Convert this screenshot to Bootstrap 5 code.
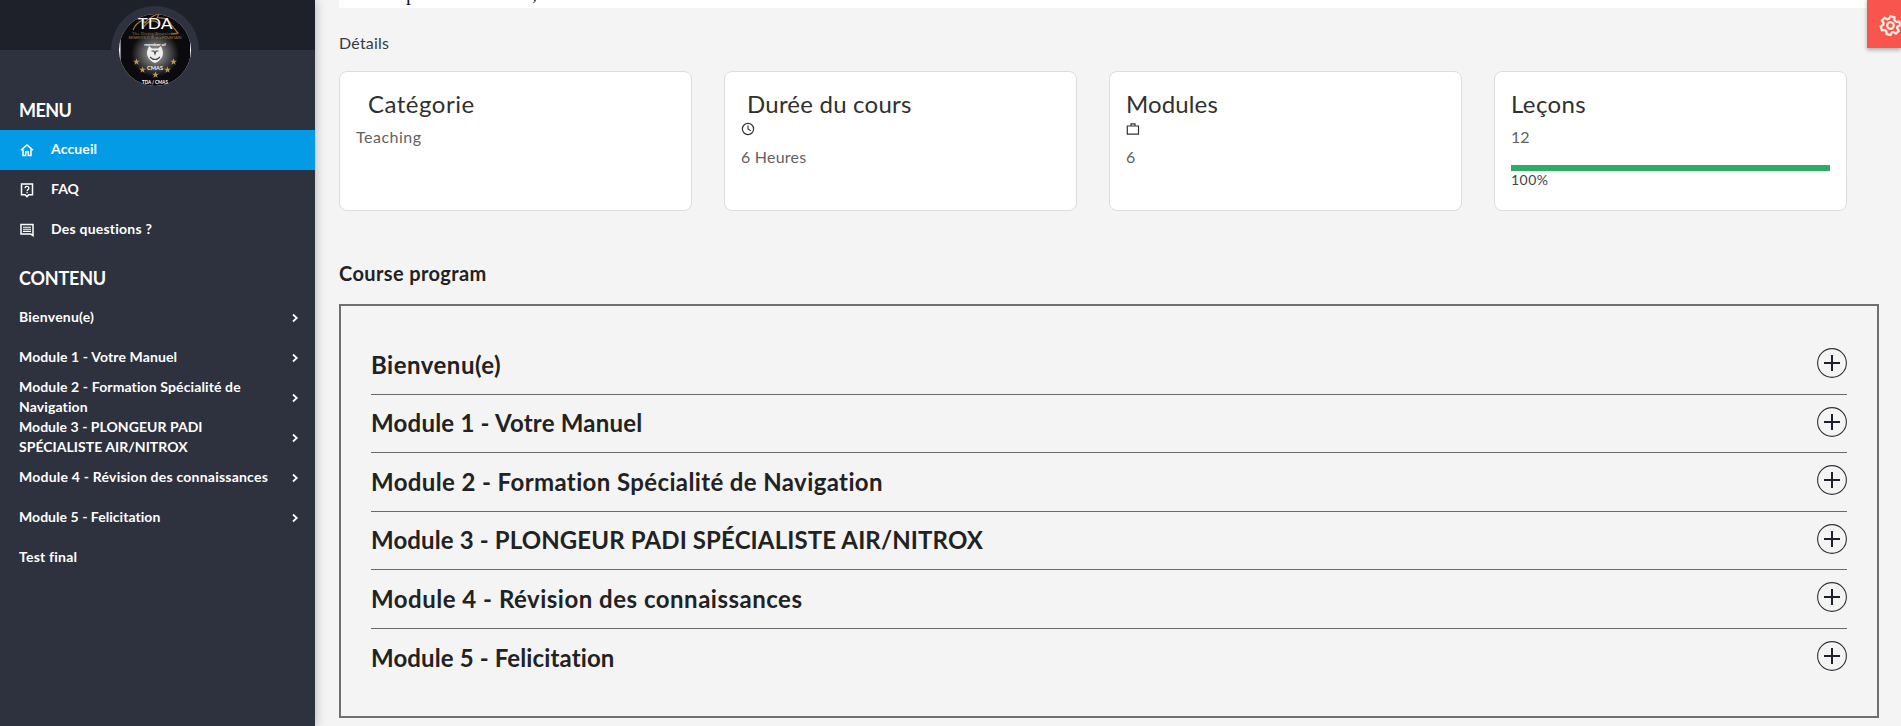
<!DOCTYPE html>
<html lang="fr">
<head>
<meta charset="utf-8">
<meta name="viewport" content="width=device-width, initial-scale=1">
<title>TDA / CMAS</title>
<link href="https://cdn.jsdelivr.net/npm/bootstrap@5.3.0/dist/css/bootstrap.min.css" rel="stylesheet">
<style>
body{font-family:Lato,"Open Sans",sans-serif;background:#f4f4f4;color:#222;font-size:16px;height:726px;overflow:hidden}
.side{width:315px;height:726px;background:#2e313e;color:#fff;box-shadow:0 0 10px rgba(40,40,60,.35);z-index:2}
.side-top{height:90px;background:linear-gradient(#1e212a 50px,#2e313e 50px)}
.logo-ring{width:88px;height:88px;margin:6px 0 0 -6px;border-radius:50%;background:#2e313e;display:block}
.side-title{font-size:18px;font-weight:700;line-height:40px;padding-left:19px}
.side-link{height:40px;font-size:14px;font-weight:700;line-height:20px;padding:0 16px 0 19px;color:#fff;text-decoration:none}
.side-link.on{background:#039be5}
.side-link span{margin-top:-2px}
.side-link .lead-ic{width:16px;height:16px;margin-right:16px}
.main-col{padding:0 22px 0 24px}
.intro{height:8px;background:#fff;overflow:hidden;font:20px/20px "Liberation Serif",serif;color:#111}
.intro p{margin-top:-17px;padding-left:67px}
.intro span{margin-right:116px}
.sect-label{padding-top:23px;color:#3a3a3a}
.tiles{gap:32px;padding-right:32px}
.tile{height:140px;border:1px solid #ddd;border-radius:8px;padding:14px 16px 16px;flex:1 1 0}
.tile h2{font-size:24px;font-weight:400;line-height:36px;margin:0 0 2px;color:#303030}
.tile p{font-size:16px;line-height:24px;margin:0;padding-top:1px;color:#626262}
.tile svg{width:14px;height:14px;display:block;margin-top:-2px}
.tile svg + p{padding-top:9px}
.dur{padding-left:6px}
.bar{height:6px;background:#2eab66;border-radius:0}
.tile .bar-wrap{margin-top:16px}
.bar-note{font-size:14px;line-height:18px;color:#444}
.prog-title{font-size:20px;font-weight:700;line-height:24px;padding:50px 0 19px}
.prog-box{height:414px;border:2px solid #6f6f6f;padding:30px}
.prog-row{height:58.5px;border-bottom:1px solid #6a6a6a;font-size:24px;font-weight:700}
.prog-row:last-child{border-bottom:0}
.prog-row svg{width:30px;height:30px;margin-top:-3px}
.t-2{letter-spacing:-.2px}.t0{letter-spacing:.04px}.t1{letter-spacing:.12px}.t2{letter-spacing:.22px}.t3{letter-spacing:.38px}.t4{letter-spacing:.5px}
.menu-h{letter-spacing:-.6px}
.gear{right:0;top:-2px;width:34px;height:50px;background:#f8554e;box-shadow:0 2px 4px rgba(0,0,0,.3);z-index:3;overflow:hidden}
</style>
</head>
<body class="d-flex">
<svg class="d-none">
  <symbol id="chev" viewBox="0 0 8 10"><path d="M2 1.5 5.8 5 2 8.5" fill="none" stroke="#fff" stroke-width="1.7"/></symbol>
  <symbol id="plus" viewBox="0 0 30 30"><circle cx="15" cy="15" r="14.4" fill="none" stroke="#333" stroke-width="1.1"/><path d="M7 15h16M15 7v16" stroke="#1d1f2c" stroke-width="2"/></symbol>
  <symbol id="star" viewBox="0 0 10 10"><path d="M5 .3 6.2 3.8H9.8L6.9 6 8 9.6 5 7.4 2 9.6 3.1 6 .2 3.8H3.8z" fill="#b99a4c"/></symbol>
</svg>

<nav class="side flex-shrink-0 position-relative">
  <div class="side-top d-flex justify-content-center">
    <svg class="logo-ring" viewBox="0 0 88 88">
      <defs>
        <radialGradient id="glow"><stop offset="0" stop-color="#aaa"/><stop offset=".45" stop-color="#666"/><stop offset="1" stop-color="#0b0a0e"/></radialGradient>
        <clipPath id="disc"><circle cx="44" cy="44" r="36"/></clipPath>
      </defs>
      <g clip-path="url(#disc)" font-family="Lato, sans-serif" text-anchor="middle">
        <rect width="88" height="88" fill="#fff"/><rect x="9.5" width="69.5" height="88" fill="#0b0a0e"/>
        <ellipse cx="44" cy="48" rx="24" ry="23" fill="url(#glow)"/>
        <path d="M22 24c2-5 5-8 10-10l2 3c5-6 9-8 14-9l-2 4c8-1 13 3 15 8l6 7-7 1M32 22c6-9 12-9 17-3" fill="none" stroke="#9b7b3e" stroke-width="1.2"/>
        <text x="44" y="22.5" font-size="15" fill="#fff" textLength="35" lengthAdjust="spacingAndGlyphs">TDA</text>
        <text x="44" y="28.5" font-size="4.2" fill="#8b6b3a" textLength="46">The Diving Association</text>
        <text x="44" y="33" font-size="3.8" fill="#a08048" textLength="53" lengthAdjust="spacingAndGlyphs">BENEFITS IT IF at a FOUNTAIN</text>
        <text x="44" y="39.5" font-size="4.5" font-weight="700" fill="#fff">member of</text>
        <path d="M38 40l3 2.5h6l3-2.5c.5 2 3 5 1.500 10-1 3-4.500 6-7.500 7-3-1-6.500-4-7.500-7-1.500-5 1-8 1.500-10z" fill="#eee"/>
        <path d="M40.500 45h2.500l1 3 1-3h2.500M39 51q5 5 10 0" fill="none" stroke="#444" stroke-width="1.1"/>
        <text x="44" y="63.500" font-size="5.600" font-weight="700" fill="#f4f4f4">CMAS</text>
        <use href="#star" x="22" y="52" width="7" height="7"/><use href="#star" x="28" y="60" width="7" height="7"/><use href="#star" x="41" y="65" width="7" height="7"/><use href="#star" x="53" y="60" width="7" height="7"/><use href="#star" x="59" y="52" width="7" height="7"/>
        <text x="44" y="78" font-size="4.600" font-weight="700" fill="#fff" textLength="26">TDA / CMAS</text>
      </g>
    </svg>
  </div>
  <div class="side-title menu-h">MENU</div>
  <a href="#" class="side-link on d-flex align-items-center"><svg class="lead-ic" viewBox="0 0 16 16"><path d="M2 8.3 8 3l6 5.3M4 7.500v6h2.700V9.700h2.600v3.800H12v-6" fill="none" stroke="#fff" stroke-width="1.500"/></svg><span class="t1">Accueil</span></a>
  <a href="#" class="side-link d-flex align-items-center"><svg class="lead-ic" viewBox="0 0 16 16"><path d="M2.500 2h11v10.800h-3.700L8 14.600l-1.800-1.800H2.500z" fill="none" stroke="#fff" stroke-width="1.500"/><path d="M6.100 6.200c0-2.400 3.800-2.400 3.800 0 0 1.300-1.800 1.300-1.800 3M8.100 10v1.300" fill="none" stroke="#fff" stroke-width="1.300"/></svg><span class="t0">FAQ</span></a>
  <a href="#" class="side-link d-flex align-items-center"><svg class="lead-ic" viewBox="0 0 16 16"><path d="M2 2.500h12v11L11.700 12H2z" fill="none" stroke="#fff" stroke-width="1.500"/><path d="M4 5.200h8M4 7.300h8M4 9.400h8" stroke="#fff" stroke-width="1.100"/></svg><span class="t2">Des questions ?</span></a>
  <div class="side-title t-2 pt-2">CONTENU</div>
  <a href="#" class="side-link d-flex align-items-center justify-content-between"><span class="t2">Bienvenu(e)</span><svg width="8" height="10"><use href="#chev"/></svg></a>
  <a href="#" class="side-link d-flex align-items-center justify-content-between"><span class="t1">Module 1 - Votre Manuel</span><svg width="8" height="10"><use href="#chev"/></svg></a>
  <a href="#" class="side-link d-flex align-items-center justify-content-between"><span class="t1">Module 2 - Formation Spécialité de<br>Navigation</span><svg width="8" height="10"><use href="#chev"/></svg></a>
  <a href="#" class="side-link d-flex align-items-center justify-content-between"><span class="t0">Module 3 - PLONGEUR PADI<br>SPÉCIALISTE AIR/NITROX</span><svg width="8" height="10"><use href="#chev"/></svg></a>
  <a href="#" class="side-link d-flex align-items-center justify-content-between"><span class="t2">Module 4 - Révision des connaissances</span><svg width="8" height="10"><use href="#chev"/></svg></a>
  <a href="#" class="side-link d-flex align-items-center justify-content-between"><span class="t0">Module 5 - Felicitation</span><svg width="8" height="10"><use href="#chev"/></svg></a>
  <a href="#" class="side-link d-flex align-items-center"><span class="t2">Test final</span></a>
</nav>

<main class="main-col flex-grow-1">
  <div class="intro"><p><span>p</span>,</p></div>
  <div class="sect-label t2 mb-3">Détails</div>
  <div class="tiles d-flex">
    <section class="tile bg-white"><h2 class="t4 ps-2 ms-1">Catégorie</h2><p class="t4">Teaching</p></section>
    <section class="tile bg-white"><h2 class="t2 dur">Durée du cours</h2>
      <svg viewBox="0 0 14 14"><circle cx="7" cy="7" r="5.600" fill="none" stroke="#333" stroke-width="1.200"/><path d="M7 3.600V7l2.600 1.700" fill="none" stroke="#333" stroke-width="1.100"/></svg>
      <p class="t2">6 Heures</p></section>
    <section class="tile bg-white"><h2 class="t1">Modules</h2>
      <svg viewBox="0 0 14 14"><path d="M1.300 4h11.200v8.200H1.300zM5 4V1.800h4V4" fill="none" stroke="#333" stroke-width="1.200"/></svg>
      <p>6</p></section>
    <section class="tile bg-white"><h2 class="t3">Leçons</h2><p>12</p>
      <div class="progress bar bar-wrap"><div class="progress-bar bar w-100"></div></div>
      <div class="bar-note t4">100%</div></section>
  </div>
  <h3 class="prog-title t3 mb-0">Course program</h3>
  <div class="prog-box">
    <div class="prog-row d-flex align-items-center justify-content-between"><span class="t4">Bienvenu(e)</span><svg><use href="#plus"/></svg></div>
    <div class="prog-row d-flex align-items-center justify-content-between"><span class="t2">Module 1 - Votre Manuel</span><svg><use href="#plus"/></svg></div>
    <div class="prog-row d-flex align-items-center justify-content-between"><span class="t3">Module 2 - Formation Spécialité de Navigation</span><svg><use href="#plus"/></svg></div>
    <div class="prog-row d-flex align-items-center justify-content-between"><span class="t1">Module 3 - PLONGEUR PADI SPÉCIALISTE AIR/NITROX</span><svg><use href="#plus"/></svg></div>
    <div class="prog-row d-flex align-items-center justify-content-between"><span class="t4">Module 4 - Révision des connaissances</span><svg><use href="#plus"/></svg></div>
    <div class="prog-row d-flex align-items-center justify-content-between"><span class="t1">Module 5 - Felicitation</span><svg><use href="#plus"/></svg></div>
  </div>
</main>

<div class="gear position-absolute"><svg width="34" height="50" viewBox="0 0 34 50"><g transform="translate(23.500 27.500) rotate(12)" fill="none" stroke="#fff0e4" stroke-width="2.200"><path d="M-2-9H2L2.800-6 5-4.800 8-5.700 9.400-2.300 7-.2V1.200L9.200 3.500 7 6.800 4.200 5.700 2.600 6.800 2 9.200H-2L-2.800 6.600-4.600 5.600-7.400 6.400-9.400 3-7.200.8V-.8L-9.400-3-7.400-6.200-4.600-5.400-2.800-6.500z"/><circle r="3.300"/></g></svg></div>
<script src="https://cdn.jsdelivr.net/npm/bootstrap@5.3.0/dist/js/bootstrap.bundle.min.js"></script>
</body>
</html>
